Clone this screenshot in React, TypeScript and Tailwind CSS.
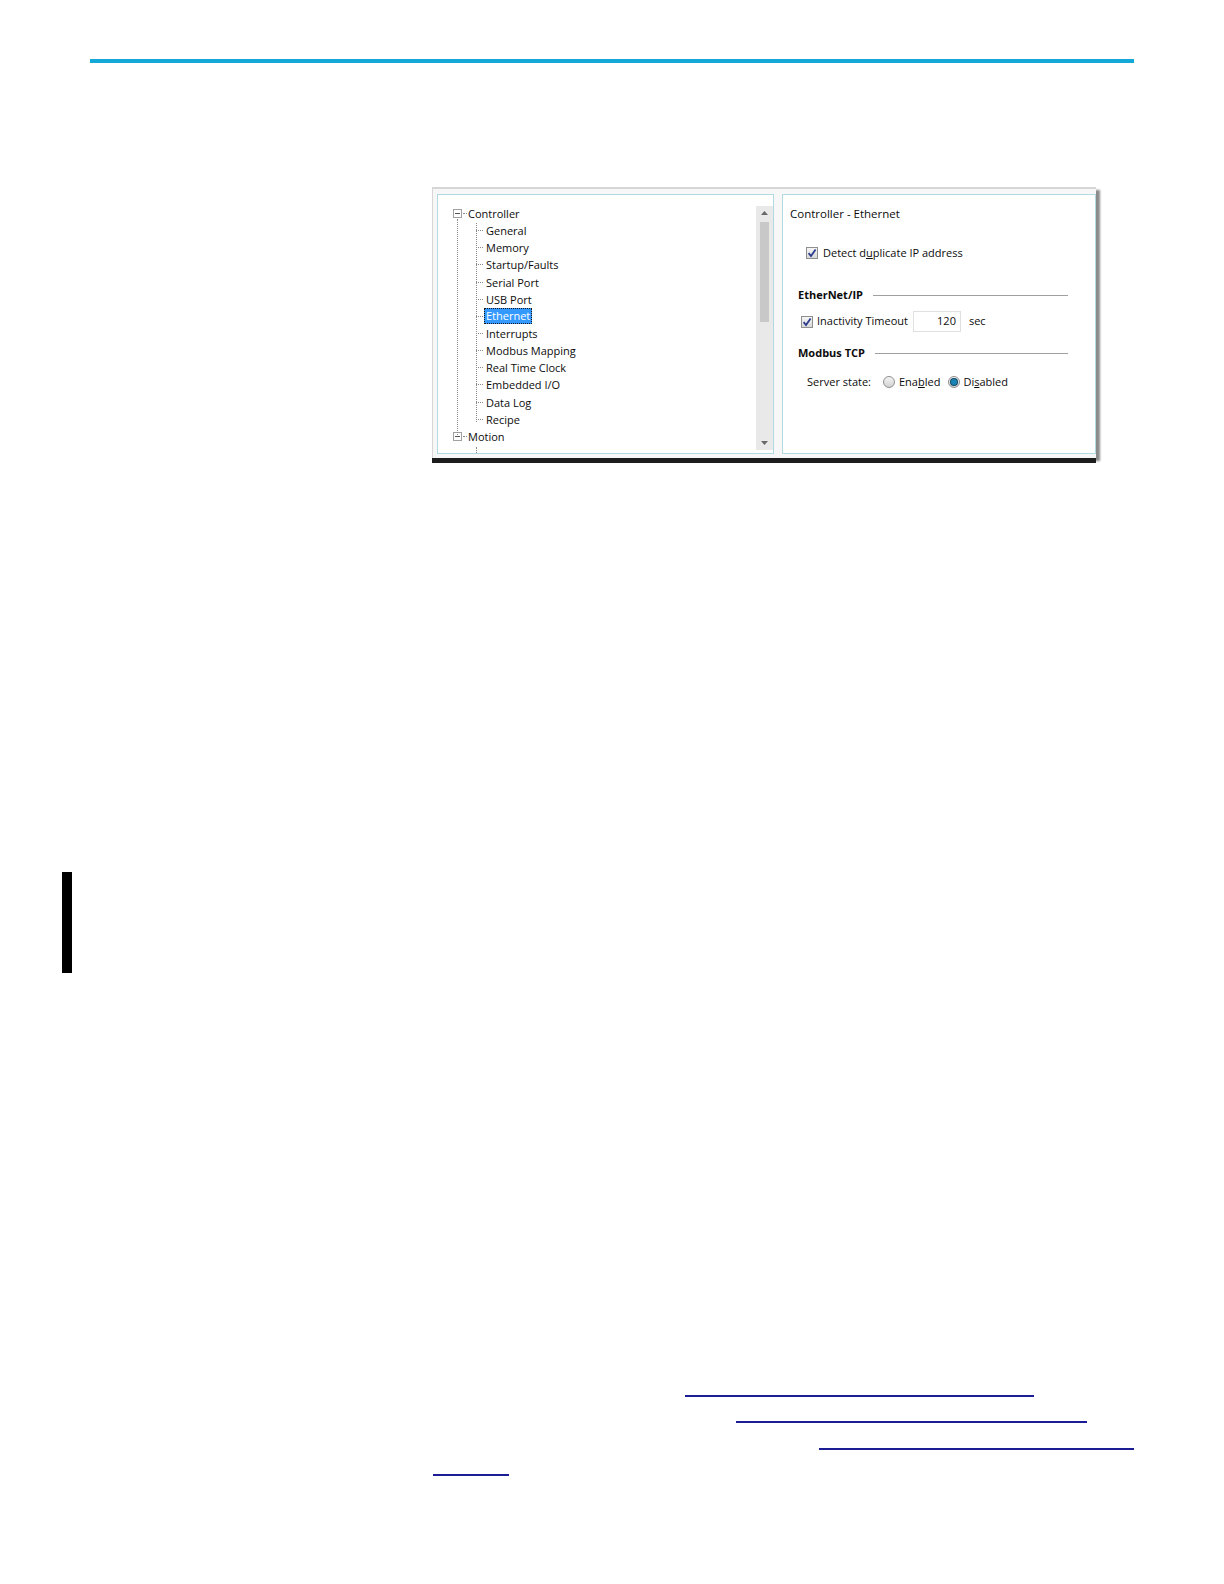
import React from "react";

const font = { fontFamily: '"Open Sans", "Noto Sans", "Liberation Sans", sans-serif' };

const children = [
  "General",
  "Memory",
  "Startup/Faults",
  "Serial Port",
  "USB Port",
  "Ethernet",
  "Interrupts",
  "Modbus Mapping",
  "Real Time Clock",
  "Embedded I/O",
  "Data Log",
  "Recipe",
];

function Expander() {
  return (
    <span className="inline-flex h-[9px] w-[9px] shrink-0 items-center justify-center border border-[#a0a0a0] bg-white">
      <span className="h-px w-[5px] bg-[#555]" />
    </span>
  );
}

function Check() {
  return (
    <span className="inline-flex h-[12px] w-[12px] shrink-0 items-center justify-center border border-[#8f8f8f] bg-gradient-to-b from-[#f6f6f6] to-[#d8d8d8]">
      <svg width="10" height="10" viewBox="0 0 10 10">
        <path d="M1.6 5.2 L4 8 L8.6 1.4" fill="none" stroke="#2b3c8c" strokeWidth="1.8" />
      </svg>
    </span>
  );
}

function Radio({ on }: { on?: boolean }) {
  return (
    <span className="inline-flex h-[12px] w-[12px] shrink-0 items-center justify-center rounded-full border border-[#8f8f8f] bg-gradient-to-b from-[#f4f4f4] to-[#d2d2d2]">
      {on && <span className="h-[6px] w-[6px] rounded-full bg-[#1b84b4] ring-1 ring-[#114c68]" />}
    </span>
  );
}

function Tree() {
  return (
    <div className="flex h-[260px] w-[337px] border border-[#b3d9e3] bg-white" style={font}>
      <div className="relative flex-1 pl-[15px] pt-[10px] text-[11px] leading-[17.15px] text-[#0c0c0c]">
        {/* dotted guides */}
        <div className="absolute left-[19px] top-[24px] h-[216px] border-l border-dotted border-[#8a8a8a]" />
        <div className="absolute left-[38px] top-[28px] h-[199px] border-l border-dotted border-[#8a8a8a]" />
        <div className="absolute left-[38px] top-[252px] h-[6px] border-l border-dotted border-[#8a8a8a]" />
        <div className="flex h-[17.15px] items-center">
          <Expander />
          <span className="ml-[1px] w-[4px] border-t border-dotted border-[#8a8a8a]" />
          <span className="ml-[1px]">Controller</span>
        </div>
        {children.map((c) => (
          <div key={c} className="flex h-[17.15px] items-center pl-[23px]">
            <span className="w-[7px] border-t border-dotted border-[#8a8a8a]" />
            {c === "Ethernet" ? (
              <span className="ml-[1px] border border-dotted border-[#1a1a1a] bg-[#3399ff] px-[1px] leading-[14px] text-white">
                {c}
              </span>
            ) : (
              <span className="ml-[3px]">{c}</span>
            )}
          </div>
        ))}
        <div className="flex h-[17.15px] items-center">
          <Expander />
          <span className="ml-[1px] w-[4px] border-t border-dotted border-[#8a8a8a]" />
          <span className="ml-[1px]">Motion</span>
        </div>
      </div>
      <div className="mt-[11px] mb-[3px] flex w-[17px] flex-col items-center bg-[#e9e9e9]">
        <svg width="9" height="14" viewBox="0 0 9 14">
          <path d="M1 9 L4.5 5 L8 9 Z" fill="#6a6a6a" />
        </svg>
        <div className="mt-[2px] h-[100px] w-[9px] bg-[#c8c8c8]" />
        <div className="flex-1" />
        <svg width="9" height="12" viewBox="0 0 9 12" className="mb-[1px]">
          <path d="M1 4 L8 4 L4.5 8 Z" fill="#6a6a6a" />
        </svg>
      </div>
    </div>
  );
}

function Section({ title }: { title: string }) {
  return (
    <div className="flex h-[16px] w-[270px] items-center">
      <span className="font-bold text-[#0c0c0c]">{title}</span>
      <span className="ml-[10px] h-px flex-1 bg-[#a0a0a0]" />
    </div>
  );
}

function Settings() {
  return (
    <div className="flex h-[260px] w-[314px] flex-col border border-[#b3d9e3] bg-white text-[11px] text-[#0c0c0c]" style={font}>
      <div className="ml-[7px] mt-[11px] flex h-[16px] items-center text-[11.5px]">Controller - Ethernet</div>
      <div className="ml-[23px] mt-[23px] flex h-[16px] items-center">
        <Check />
        <span className="ml-[5px]">
          Detect d<span className="underline">u</span>plicate IP address
        </span>
      </div>
      <div className="ml-[15px] mt-[26px]">
        <Section title="EtherNet/IP" />
      </div>
      <div className="ml-[18px] mt-[8px] flex h-[21px] items-center">
        <Check />
        <span className="ml-[4px]">Inactivity Timeout</span>
        <span className="ml-[5px] flex h-[21px] w-[48px] items-center justify-end border border-[#e0e0e0] pr-[4px]">120</span>
        <span className="ml-[8px]">sec</span>
      </div>
      <div className="ml-[15px] mt-[13px]">
        <Section title="Modbus TCP" />
      </div>
      <div className="ml-[24px] mt-[13px] flex h-[16px] items-center">
        <span>Server state:</span>
        <span className="ml-[12px] flex"><Radio /></span>
        <span className="ml-[4px]">
          Ena<span className="underline">b</span>led
        </span>
        <span className="ml-[8px] flex"><Radio on /></span>
        <span className="ml-[3px]">
          Di<span className="underline">s</span>abled
        </span>
      </div>
    </div>
  );
}

export default function App() {
  return (
    <div className="relative h-[1584px] w-full overflow-hidden bg-white">
      <div className="pl-[90px] pt-[59px]">
        <div className="h-[4px] w-[1044px] bg-[#12a8d8]" />
      </div>

      <div className="ml-[432px] mt-[124px] w-fit">
        <div className="flex gap-[8px] border-t-2 border-l border-[#d6d6d6] bg-[#f7f7f7] pl-[4px] pt-[5px] pb-[4px] shadow-[0_5px_0_#1c1c1c,4px_3px_2px_#8a8a8a]">
          <Tree />
          <Settings />
        </div>
      </div>

      <div className="ml-[62px] mt-[414px] h-[101px] w-[10px] bg-black" />

      <div className="mt-[410px]">
        <div className="ml-[685px] h-[14px] w-[349px] border-b-2 border-[#1c1c94]" />
        <div className="ml-[736px] mt-[12.3px] h-[14px] w-[351px] border-b-2 border-[#1c1c94]" />
        <div className="ml-[819px] mt-[12.3px] h-[14px] w-[315px] border-b-2 border-[#1c1c94]" />
        <div className="ml-[433px] mt-[12.3px] h-[14px] w-[76px] border-b-2 border-[#1c1c94]" />
      </div>
    </div>
  );
}
